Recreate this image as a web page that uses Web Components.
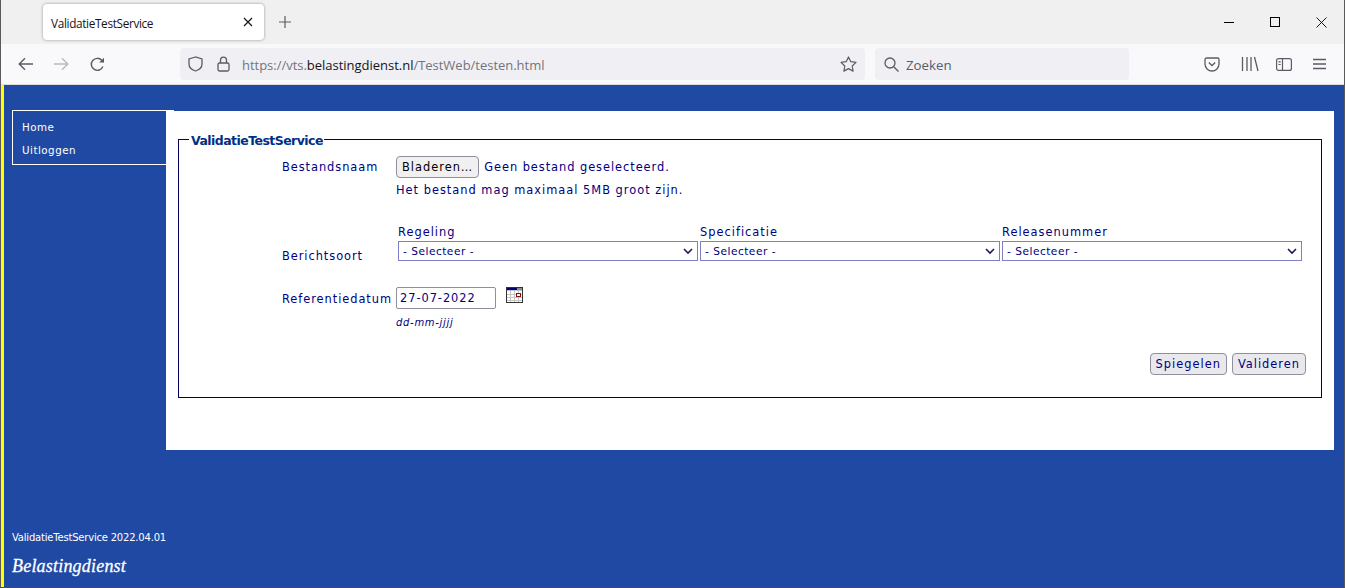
<!DOCTYPE html>
<html lang="nl">
<head>
<meta charset="utf-8">
<title>ValidatieTestService</title>
<style>
  html, body { margin: 0; height: 100%; overflow: hidden; }
</style>
</head>
<body>
<vt-window>
  <vt-browser-bar slot="chrome" title-text="ValidatieTestService"></vt-browser-bar>
  <vt-page>
    <vt-nav slot="nav">
      <a>Home</a>
      <a>Uitloggen</a>
    </vt-nav>
    <vt-form slot="main"></vt-form>
    <vt-footer slot="footer" version="ValidatieTestService 2022.04.01"></vt-footer>
  </vt-page>
</vt-window>

<script>
(function () {
  const define = (name, html) => {
    const template = document.createElement('template')
    template.innerHTML = html
    customElements.define(name, class extends HTMLElement {
      constructor() {
        super()
        this.attachShadow({ mode: 'open' })
        this.shadowRoot.appendChild(template.content.cloneNode(true))
      }
      connectedCallback() {
        const title = this.shadowRoot.querySelector('[data-title]')
        if (title) title.textContent = this.getAttribute('title-text')
        const version = this.shadowRoot.querySelector('[data-version]')
        if (version) version.textContent = this.getAttribute('version')
      }
    })
  }

  define('vt-window', `
    <style>
      :host {
        display: flex;
        flex-direction: column;
        height: 588px;
        box-sizing: border-box;
        border-left: 1px solid #5a5a5a;
        border-right: 1px solid #5a5a5a;
        border-bottom: 1px solid #4a4a4a;
      }
    </style>
    <slot name="chrome"></slot>
    <slot></slot>
  `)

  define('vt-browser-bar', `
    <style>
      :host { display: block; font-family: "Open Sans", "Noto Sans", sans-serif; flex: none; }
      svg { display: block; flex: none; }
      .titlebar { display: flex; align-items: center; height: 44px; background: #f0f0f0; padding-left: 42px; }
      .tab {
        display: flex; align-items: center; justify-content: space-between; box-sizing: border-box;
        width: 221px; height: 36px; padding: 0 11px 0 8px;
        background: #fff; border-radius: 4px; box-shadow: 0 0 3px rgba(0,0,0,.4);
        font: 11.8px/16px "Open Sans", sans-serif; color: #15141a; letter-spacing: -.35px;
      }
      .tab span { padding-top: 2px; }
      .new { margin-left: 14px; }
      .win { margin-left: auto; display: flex; }
      .win div { width: 46px; height: 44px; display: flex; align-items: center; justify-content: center; }
      .toolbar {
        display: flex; align-items: center; box-sizing: border-box; background: #f9f9fb;
        border-bottom: 1px solid #dcdcdc; height: 41px;
      }
      .nav { display: flex; width: 179px; padding-left: 17px; box-sizing: border-box; gap: 21px; }
      .url {
        display: flex; align-items: center; width: 685px; height: 32px; box-sizing: border-box;
        background: #f0f0f4; border-radius: 4px; padding: 0 8px; font-size: 13px; letter-spacing: -.02px; color: #74747c;
      }
      .url .shield { margin-right: 14px; }
      .url .lock { margin-right: 12px; }
      .url span { flex: 1; white-space: nowrap; padding-top: 2px; }
      .url b { font-weight: 400; color: #15141a; }
      .search {
        display: flex; align-items: center; gap: 7px; width: 254px; height: 32px; margin-left: 10px; box-sizing: border-box;
        background: #f0f0f4; border-radius: 4px; padding-left: 9px; font-size: 13.3px; color: #5b5b66;
      }
      .search span { padding-top: 2px; }
      .tools { display: flex; align-items: center; margin-left: 75px; }
    </style>
    <div class="titlebar">
      <div class="tab">
        <span data-title></span>
        <svg width="10" height="10" viewBox="0 0 10 10" fill="none" stroke="#15141a" stroke-width="1.2"><path d="M1 1l8 8M9 1l-8 8"/></svg>
      </div>
      <svg class="new" width="14" height="14" viewBox="0 0 14 14" fill="none" stroke="#5b5b66" stroke-width="1.2"><path d="M7 1v12M1 7h12"/></svg>
      <div class="win">
        <div><svg width="10" height="10" viewBox="0 0 10 10" stroke="#000" fill="none"><path d="M0 5.5h10"/></svg></div>
        <div><svg width="10" height="10" viewBox="0 0 10 10" stroke="#000" fill="none"><rect x=".5" y=".5" width="9" height="9"/></svg></div>
        <div><svg width="11" height="11" viewBox="0 0 11 11" stroke="#000" fill="none" stroke-width=".9"><path d="M.5.5l10 10M10.5.5l-10 10"/></svg></div>
      </div>
    </div>
    <div class="toolbar">
      <div class="nav">
        <svg width="15" height="14" viewBox="0 0 15 14" fill="none" stroke="#5b5b66" stroke-width="1.4"><path d="M15 7H1.5M7 1.2L1.2 7 7 12.8"/></svg>
        <svg width="15" height="14" viewBox="0 0 15 14" fill="none" stroke="#b9b9be" stroke-width="1.4"><path d="M0 7h13.5M8 1.2L13.8 7 8 12.8"/></svg>
        <svg width="15" height="15" viewBox="0 0 15 15" fill="none" stroke="#5b5b66" stroke-width="1.4"><path d="M12.9 9.6A6 6 0 1 1 11.8 3.3L13.6 5"/><path d="M14 .8v4.8H9.2" fill="#5b5b66" stroke="none"/></svg>
      </div>
      <div class="url">
        <svg class="shield" width="15" height="16" viewBox="0 0 15 16" fill="none" stroke="#5b5b66" stroke-width="1.3"><path d="M7.5 1L1 3v5c0 3.6 3.2 6 6.5 7 3.3-1 6.5-3.4 6.5-7V3z"/></svg>
        <svg class="lock" width="13" height="16" viewBox="0 0 13 16" fill="none" stroke="#5b5b66" stroke-width="1.3"><rect x="1" y="7" width="11" height="8" rx="1.5"/><path d="M3.5 7V4.2a3 3 0 0 1 6 0V7"/></svg>
        <span>https://vts.<b>belastingdienst.nl</b>/TestWeb/testen.html</span>
        <svg width="17" height="16" viewBox="0 0 17 16" fill="none" stroke="#5b5b66" stroke-width="1.2" stroke-linejoin="round"><path d="M8.5 1l2.3 4.7 5.2.7-3.8 3.6.9 5.1-4.6-2.5-4.6 2.5.9-5.1L1 6.4l5.2-.7z"/></svg>
      </div>
      <div class="search">
        <svg width="15" height="15" viewBox="0 0 15 15" fill="none" stroke="#5b5b66" stroke-width="1.3"><circle cx="6" cy="6" r="5"/><path d="M9.7 9.7L14.5 14.5"/></svg>
        <span>Zoeken</span>
      </div>
      <div class="tools">
        <svg width="16" height="15" viewBox="0 0 16 15" fill="none" stroke="#5b5b66" stroke-width="1.3"><path d="M2.5 1h11A1.5 1.5 0 0 1 15 2.5V7a7 7 0 0 1-14 0V2.5A1.5 1.5 0 0 1 2.5 1z"/><path d="M4.8 5.5L8 8.5l3.2-3"/></svg>
        <svg style="margin-left:21px" width="18" height="16" viewBox="0 0 18 16" fill="none" stroke="#5b5b66" stroke-width="1.3"><path d="M1.5 1v14M6 1v14M10 1v14M13.5 1L17 15"/></svg>
        <svg style="margin-left:17px" width="16" height="13" viewBox="0 0 16 13" fill="none" stroke="#5b5b66" stroke-width="1.2"><rect x=".6" y=".6" width="14.8" height="11.8" rx="2"/><path d="M6.5 1v11M2.5 3.8h2.2M2.5 6.5h2.2"/></svg>
        <svg style="margin-left:21px" width="13" height="12" viewBox="0 0 13 12" fill="none" stroke="#5b5b66" stroke-width="1.3"><path d="M0 1.5h13M0 6h13M0 10.5h13"/></svg>
      </div>
    </div>
  `)

  define('vt-page', `
    <style>
      :host {
        display: grid; flex: 1; min-height: 0;
        grid-template-columns: 154px 1168px;
        grid-template-rows: auto 1fr auto;
        background: #2049a4; border-left: 3px solid #ffff00;
        padding: 25px 0 0 8px;
      }
      .main { grid-column: 2; grid-row: 1 / 3; }
      .nav { grid-column: 1; grid-row: 1; }
      .foot { grid-column: 1 / 3; grid-row: 3; }
    </style>
    <div class="nav"><slot name="nav"></slot></div>
    <div class="main"><slot name="main"></slot></div>
    <div class="foot"><slot name="footer"></slot></div>
  `)

  define('vt-nav', `
    <style>
      :host {
        display: block; width: 162px; margin-right: -8px; border-top: 1px solid #fff; box-sizing: border-box;
        font: 10.3px/23px "DejaVu Sans", Verdana, sans-serif; letter-spacing: .5px; color: #fff;
      }
      .box { width: 154px; box-sizing: border-box; border-left: 1px solid #fff; border-bottom: 1px solid #fff; padding: 5px 0 2px 9px; }
      ::slotted(a) { display: block; color: #fff; }
    </style>
    <div class="box"><slot></slot></div>
  `)

  define('vt-select', `
    <style>
      :host { display: block; width: 300px; margin-right: 2px; }
      .label { font: 11.4px/17px "DejaVu Sans", Verdana, sans-serif; letter-spacing: 1px; color: #000080; height: 17px; }
      .wrap { position: relative; }
      select {
        appearance: none; display: block; width: 300px; height: 20px; box-sizing: border-box; margin: 0;
        border: 1px solid #7f7fc4; border-radius: 0; background: #fff; padding: 0 0 0 4px;
        font: 10.6px "DejaVu Sans", Verdana, sans-serif; letter-spacing: .5px; color: #000080;
      }
      svg { position: absolute; right: 5px; top: 7px; }
    </style>
    <div class="label"><slot></slot></div>
    <div class="wrap">
      <select><option>- Selecteer -</option></select>
      <svg width="10" height="7" viewBox="0 0 10 7" fill="none" stroke="#1a1a60" stroke-width="1.6"><path d="M1 1l4 4 4-4"/></svg>
    </div>
  `)

  define('vt-form', `
    <style>
      :host {
        display: block; height: 339px; box-sizing: border-box; background: #fff; margin-top: 1px;
        padding: 19px 12px 0 12px;
        font: 11.4px/16px "DejaVu Sans", Verdana, sans-serif; letter-spacing: .95px; color: #000080;
      }
      fieldset { margin: 0; padding: 7px 15px 0 103px; height: 268px; box-sizing: border-box; border: 1px solid #000060; min-width: 0; }
      legend { padding: 3px 1px 0 2px; font: bold 12.5px/16px "DejaVu Sans", Verdana, sans-serif; letter-spacing: -.55px; color: #002f87; margin-inline-start: -93px; }
      .row { display: grid; grid-template-columns: 114px auto; align-items: center; }
      .file { display: flex; align-items: center; gap: 5px; }
      .btn {
        display: inline-flex; align-items: center; justify-content: center; height: 22px; box-sizing: border-box;
        border: 1px solid #8f8f9d; border-radius: 4px; background: #e9e9ed; padding: 0 5px; margin: 0;
        font: 11.4px/16px "DejaVu Sans", Verdana, sans-serif; letter-spacing: 1px; color: #000080;
      }
      .browse { color: #000; background: #f0f0f0; }
      .note { margin: 4px 0 0 114px; letter-spacing: 1px; }
      .kinds { display: grid; grid-template-columns: 116px auto; margin-top: 26px; align-items: end; }
      .kinds .lbl { line-height: 18px; margin-bottom: -4px; }
      .sel { display: flex; }
      .date { margin-top: 26px; align-items: start; }
      .date .lbl { line-height: 24px; }
      .input {
        display: flex; align-items: center; width: 100px; height: 22px; box-sizing: border-box;
        border: 1px solid #8f8f9d; border-radius: 2px; padding-left: 3px;
      }
      .datebox { display: flex; gap: 10px; }
      .hint { margin: 5px 0 0 114px; font: italic 10px/14px "DejaVu Sans", Verdana, sans-serif; letter-spacing: .7px; }
      .actions { display: flex; justify-content: flex-end; gap: 5px; margin: 23px 0 0; }
    </style>
    <fieldset>
      <legend>ValidatieTestService</legend>
      <div class="row">
        <span>Bestandsnaam</span>
        <div class="file"><button class="btn browse">Bladeren…</button><span>Geen bestand geselecteerd.</span></div>
      </div>
      <div class="note">Het bestand mag maximaal 5MB groot zijn.</div>
      <div class="kinds">
        <span class="lbl">Berichtsoort</span>
        <div class="sel">
          <vt-select>Regeling</vt-select>
          <vt-select>Specificatie</vt-select>
          <vt-select>Releasenummer</vt-select>
        </div>
      </div>
      <div class="row date">
        <span class="lbl">Referentiedatum</span>
        <div class="datebox">
          <span class="input">27-07-2022</span>
          <svg width="17" height="16" viewBox="0 0 17 16" shape-rendering="crispEdges">
            <rect width="17" height="16" fill="#333"/>
            <rect x="1" y="1" width="15" height="14" fill="#fff"/>
            <rect x="1" y="1" width="10" height="2" fill="#000080"/>
            <rect x="11" y="1" width="5" height="2" fill="#8a8a8a"/>
            <path d="M1 3.5h15M1 7.5h15M1 10.5h15M1 13.5h15M4.5 4v11M8.5 4v11M12.500 4v11" stroke="#c4c4c4" fill="none"/>
            <rect x="10.5" y="6.5" width="4" height="3" fill="#fff" stroke="#8a1010"/>
          </svg>
        </div>
      </div>
      <div class="hint">dd-mm-jjjj</div>
      <div class="actions"><button class="btn">Spiegelen</button><button class="btn">Valideren</button></div>
    </fieldset>
  `)

  define('vt-footer', `
    <style>
      :host { display: block; color: #fff; height: 56px; }
      .v { font: 10px/14px "DejaVu Sans", Verdana, sans-serif; letter-spacing: -.2px; }
      .logo { font: italic 18px/22px "Liberation Serif", serif; margin-top: 10px; letter-spacing: .2px; -webkit-text-stroke: .3px #fff; }
    </style>
    <div class="v" data-version></div>
    <div class="logo">Belastingdienst</div>
  `)
})();
</script>
</body>
</html>
